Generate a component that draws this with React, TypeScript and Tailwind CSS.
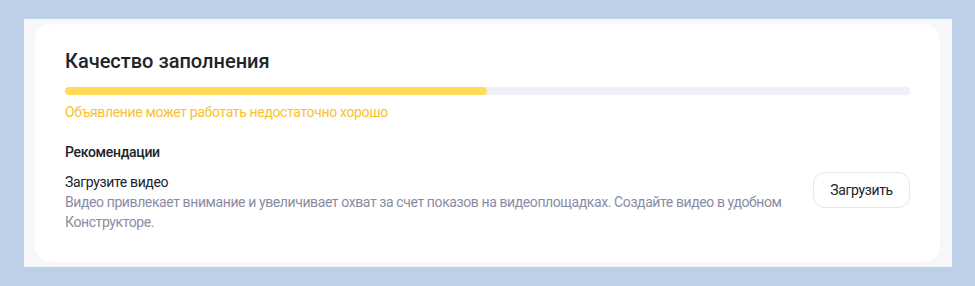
export default function App() {
  return (
    <div className="h-[286px] w-[975px] bg-[#bed0e8] pt-[19px] pl-[24px] font-['Roboto',sans-serif]">
      <div className="h-[248px] w-[928px] bg-[#f6f7fb] pt-[5px] pl-[11px]">
        <div className="h-[238px] w-[905px] rounded-[16px] bg-white px-[30px] pt-[23px]">
          <h2 className="text-[20px] leading-[28px] font-medium text-[#21242c]">Качество заполнения</h2>
          <div className="mt-[12px] h-[8px] w-full rounded-full bg-[#eef1f5]">
            <div className="h-full w-[422px] rounded-full bg-[#ffdc5a]" />
          </div>
          <p className="mt-[7px] text-[14px] leading-[20px] tracking-[-0.35px] text-[#fbbf2c]">
            Объявление может работать недостаточно хорошо
          </p>
          <h3 className="mt-[20px] text-[14px] leading-[20px] font-medium tracking-[-0.3px] text-[#21242c]">Рекомендации</h3>
          <div className="mt-[10px] flex items-start gap-[8px] tracking-[-0.35px]">
            <div className="flex-1">
              <div className="text-[14px] leading-[20px] text-[#21242c]">Загрузите видео</div>
              <div className="text-[14px] leading-[20px] tracking-[-0.4px] text-[#8b8ca4]">
                Видео привлекает внимание и увеличивает охват за счет показов на видеоплощадках. Создайте видео в удобном Конструкторе.
              </div>
            </div>
            <button className="h-[36px] w-[97px] shrink-0 rounded-[12px] border border-[#e4e6ef] text-[14px] text-[#21242c]">
              Загрузить
            </button>
          </div>
        </div>
      </div>
    </div>
  );
}
